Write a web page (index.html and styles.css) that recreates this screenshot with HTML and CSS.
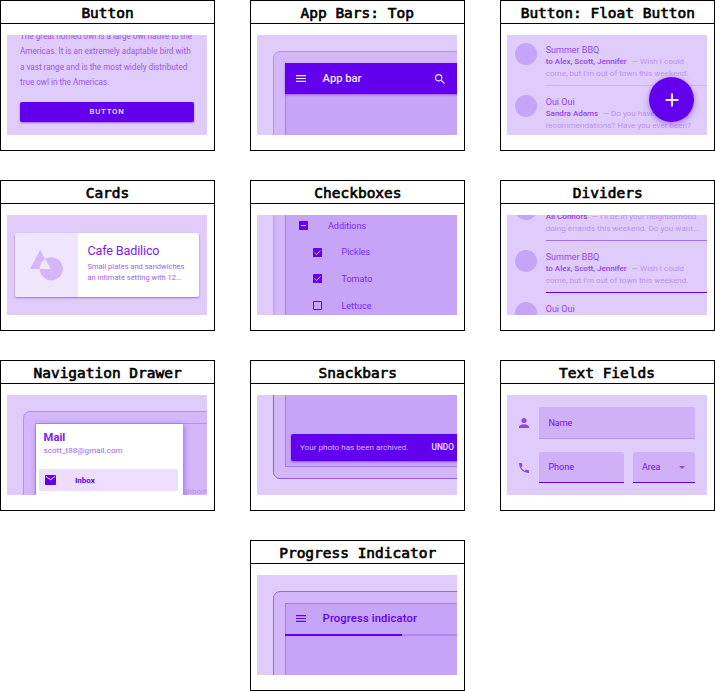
FILE: index.html
```html
<!DOCTYPE html>
<html lang="en">
<head>
<meta charset="utf-8">
<title>Components</title>
<link rel="stylesheet" href="styles.css">
</head>
<body>
<main class="grid">
  <section class="card">
    <h2><span>Button</span></h2>
    <div class="thumb button-demo">
      <p>The great horned owl is a large owl native to the</p>
      <p>Americas. It is an extremely adaptable bird with</p>
      <p>a vast range and is the most widely distributed</p>
      <p>true owl in the Americas.</p>
      <div class="btn">BUTTON</div>
    </div>
  </section>

  <section class="card">
    <h2><span>App Bars: Top</span></h2>
    <div class="thumb">
      <div class="phone">
        <div class="screen">
          <div class="appbar solid">
            <svg class="menu" viewBox="0 0 10 7"><path d="M0 .6h10M0 3.5h10M0 6.4h10"/></svg>
            <span class="bar-title">App bar</span>
            <svg class="search" viewBox="3 3 17.5 17.5"><path d="M15.5 14h-.79l-.28-.27A6.47 6.47 0 0 0 16 9.5 6.5 6.5 0 1 0 9.5 16c1.61 0 3.09-.59 4.23-1.57l.27.28v.79l5 4.99L20.49 19l-4.99-5zm-6 0a4.5 4.5 0 1 1 0-9 4.5 4.5 0 0 1 0 9z"/></svg>
          </div>
        </div>
      </div>
    </div>
  </section>

  <section class="card">
    <h2><span>Button: Float Button</span></h2>
    <div class="thumb">
      <div class="item">
        <i class="avatar"></i>
        <div class="body">
          <p class="subj">Summer BBQ</p>
          <p class="line"><b class="n-alex">to Alex, Scott, Jennifer</b><span>— Wish I could</span></p>
          <p class="line">come, but I’m out of town this weekend.</p>
        </div>
      </div>
      <div class="item">
        <i class="avatar"></i>
        <div class="body">
          <p class="subj">Oui Oui</p>
          <p class="line"><b class="n-sandra">Sandra Adams</b><span>— Do you have Paris</span></p>
          <p class="line">recommendations? Have you ever been?</p>
        </div>
      </div>
      <div class="fab"><svg viewBox="0 0 14 14"><path d="M7 .5v13M.5 7h13"/></svg></div>
    </div>
  </section>

  <section class="card">
    <h2><span>Cards</span></h2>
    <div class="thumb cards-demo">
      <div class="cafe">
        <div class="media"><svg viewBox="0 0 33 31"><path fill-rule="evenodd" d="M10.2 0 20.8 19H0ZM21.3 7.2a11.6 11.6 0 1 0 .01 0Z"/></svg></div>
        <div class="info">
          <p class="cafe-title">Cafe Badilico</p>
          <p class="cafe-line">Small plates and sandwiches</p>
          <p class="cafe-line">an intimate setting with 12...</p>
        </div>
      </div>
    </div>
  </section>

  <section class="card">
    <h2><span>Checkboxes</span></h2>
    <div class="thumb">
      <div class="phone middle">
        <div class="screen">
          <div class="check root"><svg viewBox="0 0 9 9"><rect width="9" height="9" rx=".6"/><path d="M2 4.5h5"/></svg><span>Additions</span></div>
          <div class="check"><svg viewBox="0 0 9 9"><rect width="9" height="9" rx=".6"/><path d="m1.6 4.7 1.9 1.9 3.9-4"/></svg><span>Pickles</span></div>
          <div class="check"><svg viewBox="0 0 9 9"><rect width="9" height="9" rx=".6"/><path d="m1.6 4.7 1.9 1.9 3.9-4"/></svg><span>Tomato</span></div>
          <div class="check"><svg viewBox="0 0 9 9"><rect class="empty" x=".5" y=".5" width="8" height="8" rx=".3"/></svg><span>Lettuce</span></div>
        </div>
      </div>
    </div>
  </section>

  <section class="card">
    <h2><span>Dividers</span></h2>
    <div class="thumb dividers">
      <div class="item mid">
        <i class="avatar"></i>
        <div class="body">
          <p class="subj"></p>
          <p class="line"><b class="n-ali">Ali Connors</b><span>— I’ll be in your neighborhood</span></p>
          <p class="line">doing errands this weekend. Do you want...</p>
        </div>
      </div>
      <div class="item strong">
        <i class="avatar"></i>
        <div class="body">
          <p class="subj">Summer BBQ</p>
          <p class="line"><b class="n-alex">to Alex, Scott, Jennifer</b><span>— Wish I could</span></p>
          <p class="line">come, but I’m out of town this weekend.</p>
        </div>
      </div>
      <div class="item">
        <i class="avatar"></i>
        <div class="body"><p class="subj">Oui Oui</p></div>
      </div>
    </div>
  </section>

  <section class="card">
    <h2><span>Navigation Drawer</span></h2>
    <div class="thumb">
      <div class="phone">
        <div class="screen nav">
          <div class="drawer">
            <p class="mail">Mail</p>
            <p class="email">scott_t88@gmail.com</p>
            <div class="inbox"><svg viewBox="0 0 11 10"><rect width="11" height="10" rx=".8"/><path d="m.8 1.4 4.7 3.3 4.7-3.3"/></svg><span>Inbox</span></div>
          </div>
          <span class="behind">ghborh</span>
        </div>
      </div>
    </div>
  </section>

  <section class="card">
    <h2><span>Snackbars</span></h2>
    <div class="thumb">
      <div class="phone bottom">
        <div class="screen">
          <div class="snack"><span class="msg">Your photo has been archived.</span><span class="undo">UNDO</span></div>
        </div>
      </div>
    </div>
  </section>

  <section class="card">
    <h2><span>Text Fields</span></h2>
    <div class="thumb fields">
      <div class="row">
        <svg viewBox="4 4 16 16"><path d="M12 12a4 4 0 1 0 0-8 4 4 0 0 0 0 8zm0 2c-2.67 0-8 1.34-8 4v2h16v-2c0-2.66-5.33-4-8-4z"/></svg>
        <div class="field name"><span>Name</span></div>
      </div>
      <div class="row two">
        <svg viewBox="3 3 18 18"><path d="M6.62 10.79a15.1 15.1 0 0 0 6.59 6.59l2.2-2.2c.27-.27.67-.36 1.02-.24 1.12.37 2.33.57 3.57.57.55 0 1 .45 1 1V20c0 .55-.45 1-1 1A17 17 0 0 1 3 4c0-.55.45-1 1-1h3.5c.55 0 1 .45 1 1 0 1.25.2 2.45.57 3.57.11.35.03.74-.25 1.02l-2.2 2.2z"/></svg>
        <div class="field tel"><span>Phone</span></div>
        <div class="field area"><span>Area</span><i class="caret"></i></div>
      </div>
    </div>
  </section>

  <section class="card last">
    <h2><span>Progress Indicator</span></h2>
    <div class="thumb">
      <div class="phone crisp">
        <div class="screen">
          <div class="appbar">
            <svg class="menu" viewBox="0 0 10 7"><path d="M0 .6h10M0 3.5h10M0 6.4h10"/></svg>
            <span class="bar-title t-prog">Progress indicator</span>
          </div>
          <div class="track"><div class="fill"></div></div>
        </div>
      </div>
    </div>
  </section>
</main>
</body>
</html>
```

FILE: styles.css
```css
* { box-sizing: border-box; margin: 0; padding: 0; }
body { background: #fff; font-family: Roboto, sans-serif; width: 715px; overflow: hidden; }
svg { display: block; flex: none; }
p { white-space: nowrap; }

.grid { display: grid; grid-template-columns: repeat(3, 215px); grid-auto-rows: 151px; gap: 29px 35px; }
.card { border: 1px solid #000; }
.last { grid-column: 2; }
h2 {
  height: 23px; border-bottom: 1px solid #000; text-align: center; white-space: nowrap;
  font: 400 13.6px/24px "DejaVu Sans Mono", monospace; color: #000;
}
h2 span { display: inline-block; transform: scaleX(1.065); -webkit-text-stroke: .6px #000; }
.thumb { position: relative; width: 200px; height: 100px; margin: 11px 0 0 6px; overflow: hidden; background: #dfccfa; }

/* Button */
.button-demo { padding-left: 13px; }
.button-demo p { font-size: 8.15px; line-height: 15.5px; color: #9c55f2; }
.button-demo p:first-child { margin-top: -6.4px; }
.btn {
  width: 174px; height: 20px; margin-top: 11.4px; border-radius: 2px; background: #6200ee; color: #eee0ff;
  font-size: 7.8px; font-weight: 500; line-height: 20px; letter-spacing: .8px; text-align: center;
  box-shadow: 0 1px 2px rgba(98, 0, 238, .5);
}

/* Device frame */
.phone { width: 230px; height: 150px; margin: 16px 0 0 16px; padding: 11px; border: 1px solid #b98df5; border-radius: 7px; background: #d3b7f8; }
.screen { height: 130px; border: 1px solid #ac78f3; background: #c6a4f8; }
.crisp { border-color: #a163f2; }
.middle { margin-top: -20px; border-left: 2px solid #c6a4f8; padding-left: 10px; }
.bottom { margin-top: -66px; border-color: #9a55f1; }
.bottom .screen { height: 126px; padding: 91.5px 0 0 5px; }
.appbar { display: flex; align-items: center; width: 201px; height: 31px; margin: -1px 0 0 -1px; padding-left: 11px; color: #6200ee; }
.solid { background: #6200ee; color: #f3e8ff; box-shadow: 0 1px 2px rgba(98, 0, 238, .45); }
.menu { width: 10px; height: 7px; }
.menu path { stroke: currentColor; stroke-width: 1.2; }
.bar-title { margin-left: 16.6px; font-size: 11.2px; font-weight: 500; line-height: 14px; white-space: nowrap; width: 112.4px; }
.t-prog { letter-spacing: .15px; }
.search { width: 10px; height: 10px; fill: currentColor; }
.track { height: 2.4px; margin-left: -1px; background: #b583f5; }
.fill { width: 117px; height: 100%; background: #6200ee; }

/* Message list */
.item { display: flex; height: 52px; padding-left: 8px; }
.avatar { flex: none; width: 22.4px; height: 22.4px; margin: 8px 8.3px 0 0; border-radius: 50%; background: #c6a4f8; }
.body { flex: none; width: 161.3px; height: 51px; padding-top: 9.3px; border-bottom: 1px solid #d0b3f7; }
.subj { height: 12px; font-size: 9px; line-height: 12px; color: #9245f1; }
.line { display: flex; font-size: 8.1px; line-height: 11.3px; color: #bd93f6; }
.line b { font-weight: 500; letter-spacing: -.03px; color: #9245f1; flex: none; }
.dividers .item:first-child { margin-top: -25px; }
.mid .body { border-color: #a76df3; }
.strong .body { border-color: #6200ee; }
.n-alex { width: 86px; }
.n-sandra { width: 57px; }
.n-ali { width: 46px; }
.fab {
  position: absolute; left: 142px; top: 42px; width: 45px; height: 45px; border-radius: 50%;
  display: flex; align-items: center; justify-content: center; background: #6200ee;
  box-shadow: 0 2px 6px rgba(98, 0, 238, .45);
}
.fab svg { width: 14px; height: 14px; }
.fab path { stroke: #f0e4ff; stroke-width: 2.1; }

/* Cards */
.cards-demo { padding: 18px 0 0 8px; }
.cafe { display: flex; width: 184px; height: 64px; border-radius: 2px; overflow: hidden; background: #fff; box-shadow: 0 1px 2px rgba(98, 0, 238, .5); }
.media { width: 63px; background: #efe5fd; padding: 17px 0 0 15px; }
.media svg { width: 33px; height: 31px; fill: #d3b7f8; }
.info { padding: 10px 0 0 9.5px; }
.cafe-title { font-size: 12.6px; line-height: 16px; letter-spacing: -.15px; color: #7a22ef; margin-bottom: 2px; }
.cafe-line { font-size: 7.5px; line-height: 11px; color: #a15ff2; }

/* Checkboxes */
.check { display: flex; align-items: center; height: 26.7px; padding-left: 26.5px; font-size: 9px; color: #7d2bef; }
.check:first-child { margin-top: 4.2px; }
.root { padding-left: 13px; }
.check svg { width: 9px; height: 9px; margin-right: 20px; fill: #6200ee; }
.check path { fill: none; stroke: #d9c0fb; stroke-width: 1; }
.check .empty { fill: none; stroke: #6200ee; }

/* Navigation drawer */
.nav { position: relative; background: #d3b7f8; border-color: #b98df5; }
.drawer { width: 147px; height: 100px; padding: 7px 0 0 3px; background: #fff; box-shadow: 1px 1px 6px rgba(98, 0, 238, .45); }
.mail { padding-left: 4.6px; font-size: 11.2px; font-weight: 700; line-height: 14px; color: #7a22ef; }
.email { padding-left: 4.6px; font-size: 8.1px; line-height: 10px; color: #a363f3; }
.inbox { display: flex; align-items: center; width: 139px; height: 22px; margin-top: 14px; padding-left: 6px; border-radius: 2px; background: #ecdefc; font-size: 8px; font-weight: 700; color: #6200ee; }
.inbox svg { width: 11px; height: 10px; margin-right: 19px; fill: #6200ee; }
.inbox path { fill: none; stroke: #ecdefc; stroke-width: 1; }
.behind { position: absolute; left: 147px; top: 62px; font-size: 8px; line-height: 11px; color: #b98df5; }

/* Snackbar */
.snack { display: flex; align-items: center; width: 190px; height: 27px; padding-left: 9px; border-radius: 2px; background: #6200ee; color: #d5b8fb; font-size: 8.1px; white-space: nowrap; box-shadow: 0 1px 2px rgba(98, 0, 238, .5); }
.msg { width: 131.5px; }
.undo { color: #f0e4ff; font-weight: 500; font-size: 8.3px; }

/* Text fields */
.fields { padding: 12px 0 0 12px; }
.row { display: flex; align-items: center; width: 176px; height: 32px; }
.two { height: 31px; margin-top: 13px; }
.row svg { width: 10px; height: 10px; margin-right: 10.4px; fill: #8f43f1; }
.field { display: flex; align-items: center; height: 100%; padding-left: 9px; border-radius: 2px 2px 0 0; border-bottom: 1px solid #6200ee; background: #d0b1f8; font-size: 9px; color: #6d10ee; }
.name { width: 156px; border-bottom-color: #bd92f6; }
.tel { width: 84.6px; margin-right: 9px; }
.area { width: 62px; }
.caret { margin-left: 18.5px; border: 3px solid transparent; border-top-color: #8f43f1; border-bottom: 0; }
```
